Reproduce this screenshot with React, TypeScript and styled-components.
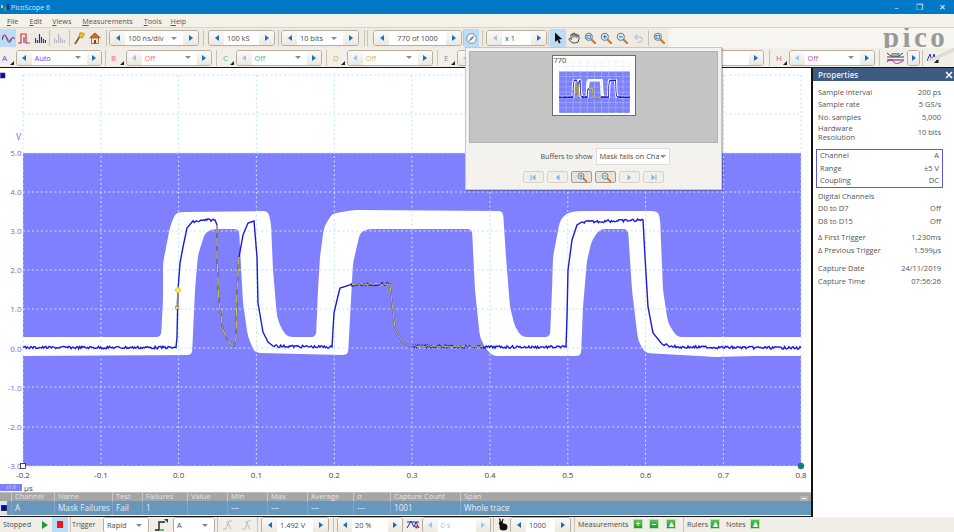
import React from "react";
import styled, { createGlobalStyle } from "styled-components";
import { Hand, Undo2 } from "lucide-react";

const UI_FONT = `"Open Sans", "Noto Sans", "Liberation Sans", sans-serif`;

const GlobalStyle = createGlobalStyle`
  html, body { margin: 0; padding: 0; background: #fff; overflow: hidden; }
  body { font-family: ${UI_FONT}; }
  * { box-sizing: border-box; }
`;

// waveform data is in page pixels, the svg viewBox below lines up with them
const MASK: [number, number][] = [
  [23, 337], [161, 337], [163, 300], [163, 263], [170, 227], [175, 214], [180, 212], [268, 211],
  [271, 223], [273, 270], [277, 317], [282, 330], [288, 337], [316, 337], [318, 290], [320, 257],
  [324, 227], [332, 214], [337, 213], [353, 210], [503, 211], [506, 257], [510, 307], [515, 327],
  [522, 337], [550, 337], [552, 290], [553, 257], [560, 220], [567, 213], [577, 211], [657, 211],
  [660, 217], [663, 290], [668, 323], [677, 337], [801, 337], [801, 356], [747, 356], [717, 357],
  [645, 353], [638, 340], [632, 290], [628, 229], [600, 229], [592, 240], [587, 260], [583, 307],
  [581, 356], [493, 356], [487, 350], [480, 338], [475, 290], [472, 229], [367, 229], [360, 233],
  [353, 263], [348, 355], [255, 353], [248, 337], [243, 303], [239, 229], [212, 229], [205, 233],
  [198, 255], [195, 290], [192, 355], [23, 356],
];

const TRACE: [number, number][] = [
  [23, 347.5], [176, 347.5], [177, 337], [178, 290], [180, 263], [183, 247], [187, 228], [192, 222],
  [207, 220], [215, 220], [217, 225], [217, 257], [219, 303], [223, 330], [228, 342], [234, 346],
  [236, 337], [237, 290], [239, 257], [243, 235], [248, 223], [254, 221], [257, 257], [258, 303],
  [263, 332], [268, 342], [273, 346], [332, 347], [334, 313], [337, 300], [340, 288], [350, 285],
  [390, 284], [392, 303], [395, 327], [402, 342], [410, 346], [483, 347], [566, 347], [567, 317],
  [568, 270], [572, 240], [577, 225], [582, 222], [643, 220], [645, 257], [648, 307], [653, 333],
  [662, 344], [677, 347], [801, 348],
];

function noisy(points: [number, number][], amp: number, seed: number) {
  let s = seed;
  const rnd = () => {
    s = (s * 9301 + 49297) % 233280;
    return s / 233280 - 0.5;
  };
  const out: string[] = [];
  points.forEach(([x, y], i) => {
    if (i === 0) {
      out.push(`M${x} ${y}`);
      return;
    }
    const [px, py] = points[i - 1];
    const flat = Math.abs(y - py) < Math.abs(x - px) * 0.3;
    const steps = flat ? Math.ceil((x - px) / 1.1) : 1;
    for (let k = 1; k <= steps; k++) {
      const t = k / steps;
      const j = flat && k < steps ? rnd() * amp : 0;
      out.push(`L${(px + (x - px) * t).toFixed(1)} ${(py + (y - py) * t + j).toFixed(1)}`);
    }
  });
  return out.join("");
}

// cuts each corner of the mask with a small curve, the plot edges stay square
function rounded(points: [number, number][], r: number) {
  const out: string[] = [];
  points.forEach(([x, y], i) => {
    const [px, py] = points[(i + points.length - 1) % points.length];
    const [nx, ny] = points[(i + 1) % points.length];
    if (x === 23 || x === 801) {
      out.push(`${i === 0 ? "M" : "L"}${x} ${y}`);
      return;
    }
    const l1 = Math.hypot(x - px, y - py);
    const l2 = Math.hypot(nx - x, ny - y);
    const a = Math.min(r, l1 / 2) / l1;
    const b = Math.min(r, l2 / 2) / l2;
    out.push(`L${x - (x - px) * a} ${y - (y - py) * a}Q${x} ${y} ${x + (nx - x) * b} ${y + (ny - y) * b}`);
  });
  return out.join("") + "Z";
}

const tracePath = noisy(TRACE, 2.6, 77);
const maskPath = rounded(MASK, 5);
const yellowA = "M217 225L217 257L219 303L223 330L228 342L234 346L236 337L237 290L239 257";
const yellowB = noisy(
  [[352, 284.5], [390, 284], [392, 303], [395, 327], [402, 342], [410, 346], [483, 347]],
  1.3,
  13,
);

const GRID_X = [23, 101, 178.6, 256.4, 334.3, 412, 490, 567.8, 645.6, 723.4, 801];
const GRID_Y = [75, 114, 153, 192, 231, 270, 309, 348, 387, 427, 466];

function ScopeDrawing({ thin }: { thin?: boolean }) {
  const dash = thin ? "8 8" : "2 2.5";
  const w = thin ? 6 : 1;
  return (
    <g>
      <rect x={23} y={153} width={778} height={313} fill="#8080ff" />
      <path d={maskPath} fill="#fff" />
      {GRID_X.map((x) => (
        <line key={x} x1={x} x2={x} y1={75} y2={466} stroke="#bde6f3" strokeWidth={w} strokeDasharray={dash} />
      ))}
      {GRID_Y.map((y) => (
        <line key={y} x1={23} x2={801} y1={y} y2={y} stroke="#bde6f3" strokeWidth={w} strokeDasharray={dash} />
      ))}
      <path d={tracePath} fill="none" stroke="#1a1ae0" strokeWidth={thin ? 9 : 1.4} />
      <path d={yellowA} fill="none" stroke="#8d8d70" strokeWidth={thin ? 9 : 1.2} />
      <path d={yellowA} fill="none" stroke="#e6df20" strokeWidth={thin ? 9 : 0.8} strokeDasharray="8 5" />
      <path d={yellowB} fill="none" stroke="#e6df20" strokeWidth={thin ? 9 : 0.9} />
      <line x1={178} y1={290} x2={177} y2={308} stroke="#8d8d70" strokeWidth={thin ? 8 : 1.5} />
      <rect x={175.5} y={306.5} width={3.5} height={2.5} fill="#ffe94a" stroke="#777" strokeWidth={0.5} />
      <polygon points="178,286.6 181.2,290 178,293.4 174.8,290" fill="#ffe94a" stroke="#a09a30" strokeWidth={0.5} />
    </g>
  );
}

const Page = styled.div`
  position: relative;
  width: 954px;
  height: 532px;
  overflow: hidden;
  display: flex;
  flex-direction: column;
  font-size: 8px;
  color: #4c4c4c;
`;

const TitleBar = styled.div`
  height: 14px;
  background: #0078c8;
  color: #d9ecf8;
  display: flex;
  align-items: center;
  padding-left: 1px;
  font-size: 7px;
  flex: none;
`;

const TitleText = styled.span`
  margin-left: 2px;
  flex: 1;
`;

const WinButton = styled.span`
  width: 23px;
  text-align: center;
  color: #e6f2fb;
  font-size: 8px;
  line-height: 14px;
`;

const MenuBar = styled.div`
  height: 14px;
  flex: none;
  background: #f4f1e9;
  display: flex;
  align-items: center;
  padding-left: 7px;
  font-size: 7.2px;
  color: #555;
  border-bottom: 1px solid #d8d2c8;
`;

const MenuItem = styled.span<{ $mr?: number }>`
  margin-right: ${(p) => p.$mr ?? 11}px;
  &::first-letter {
    text-decoration: underline;
  }
`;

const Toolbar = styled.div`
  position: relative;
  height: 20px;
  flex: none;
  display: flex;
  align-items: center;
  background: #f5f3ee;
  overflow: hidden;
`;

const ToolbarTop = styled(Toolbar)`
  background: linear-gradient(90deg, #efebe3 0, #efebe3 668px, #f6f5f1 669px);
`;

const ChannelRow = styled(Toolbar)`
  background: #f2efe8;
  border-bottom: 1px solid #141414;
`;

const BottomBar = styled(Toolbar)`
  height: 15px;
  align-items: flex-start;
  background: #f1eee7;
`;

const Sep = styled.span<{ $w?: number; $double?: boolean }>`
  flex: none;
  width: ${(p) => p.$w ?? 5}px;
  height: 16px;
  display: flex;
  justify-content: center;
  gap: 2px;
  &::before {
    content: "";
    width: 1px;
    background: #c9c2b6;
  }
  ${(p) => p.$double && `&::after { content: ""; width: 1px; background: #c9c2b6; }`}
`;

const IconBtn = styled.span<{ $w?: number; $active?: boolean; $h?: number }>`
  flex: none;
  width: ${(p) => p.$w ?? 16}px;
  height: ${(p) => p.$h ?? 18}px;
  display: flex;
  align-items: center;
  justify-content: center;
  background: ${(p) => (p.$active ? "#bcdcf6" : "transparent")};
`;

const Spin = styled.span<{ $w: number }>`
  flex: none;
  width: ${(p) => p.$w}px;
  height: 16px;
  display: flex;
  border: 1px solid #b9ae9e;
  border-radius: 3px;
  background: #f3f0ea;
  overflow: hidden;
`;

const Arrow = styled.span<{ $left?: boolean; $off?: boolean }>`
  flex: 1;
  display: flex;
  align-items: center;
  justify-content: center;
  background: linear-gradient(#fbfaf7, #ece8e0);
  &::before {
    content: "";
    border-style: solid;
    border-width: 3.5px 0;
    border-color: transparent;
    ${(p) => (p.$left ? "border-right" : "border-left")}: 4px solid
      ${(p) => (p.$off ? "#9cc5e6" : "#1a6fc4")};
  }
`;

const Field = styled.span<{ $w: number; $color?: string; $center?: boolean; $off?: boolean }>`
  flex: none;
  width: ${(p) => p.$w}px;
  background: #fff;
  color: ${(p) => (p.$off ? "#bbb" : p.$color ?? "#4c4c4c")};
  display: flex;
  align-items: center;
  justify-content: ${(p) => (p.$center ? "center" : "space-between")};
  padding: 0 3px;
  font-size: 7.4px;
  white-space: nowrap;
`;

const Caret = styled.span`
  width: 0;
  height: 0;
  margin-right: 3px;
  border-left: 3px solid transparent;
  border-right: 3px solid transparent;
  border-top: 3px solid #8a8a8a;
`;

const ChannelTag = styled.span<{ $w: number; $color: string }>`
  flex: none;
  position: relative;
  width: ${(p) => p.$w}px;
  height: 16px;
  padding-left: 2px;
  color: ${(p) => p.$color};
  font-size: 8px;
  line-height: 15px;
  &::after {
    content: "";
    position: absolute;
    right: 2px;
    bottom: 1px;
    border-style: solid;
    border-width: 0 0 4px 4px;
    border-color: transparent transparent #222 transparent;
  }
`;

const Logo = styled.span`
  position: absolute;
  left: 883px;
  top: -6px;
  font-family: "Liberation Serif", serif;
  font-weight: 700;
  font-size: 29px;
  letter-spacing: 3.4px;
  line-height: 30px;
  color: #9a9a96;
`;

const LogoSwoosh = styled.span`
  position: absolute;
  left: 928px;
  top: 0;
  width: 26px;
  height: 14px;
  background: linear-gradient(155deg, transparent 45%, #d8d6d0 46%, #e8e6e2 62%, transparent 63%);
`;

const Main = styled.div`
  flex: none;
  height: 449px;
  display: flex;
`;

const ScopePane = styled.div`
  flex: none;
  width: 813px;
  display: flex;
  flex-direction: column;
  border-right: 2px solid #141414;
  border-bottom: 1px solid #141414;
`;

const PlotSvg = styled.svg`
  display: block;
  flex: none;
  width: 811px;
  height: 414px;
  font-family: ${UI_FONT};
`;

const UnitRow = styled.div`
  height: 10px;
  flex: none;
  display: flex;
  align-items: center;
  font-size: 8px;
  color: #444;
`;

const ZoomChip = styled.span`
  width: 22px;
  height: 7px;
  background: #8080ff;
  color: #dcdcff;
  font-size: 5px;
  line-height: 7px;
  text-align: center;
  margin-right: 2px;
`;

const COLS = "11px 43px 58px 30px 45px 40px 40px 40px 46px 37px 70px 1fr";

const MeasureHead = styled.div`
  position: relative;
  height: 9px;
  flex: none;
  display: grid;
  grid-template-columns: ${COLS};
  background: #a5a5a5;
  color: #e4e4e4;
  font-size: 7.5px;
  line-height: 9px;
  box-shadow: inset 0 1px 0 #bdbdbd;
`;

const MeasureRow = styled.div`
  height: 15px;
  flex: none;
  display: grid;
  grid-template-columns: ${COLS};
  background: #6897bd;
  color: #e3edf5;
  font-size: 8.2px;
  line-height: 14px;
  border-bottom: 1px solid #fff;
`;

const Cell = styled.span`
  padding-left: 3px;
  border-left: 1px solid #c9c9c9;
  white-space: nowrap;
  overflow: hidden;
`;

const DataCell = styled(Cell)`
  border-left: 1px solid #7fa7c8;
`;

const RowMark = styled.span`
  background: #d8e3ec;
  display: flex;
  align-items: center;
  padding-left: 1px;
  width: 7px;
  &::before {
    content: "";
    width: 4px;
    height: 4px;
    background: #0000d0;
    border: 0.5px solid #333;
  }
`;

const Collapse = styled.span`
  position: absolute;
  right: 3px;
  top: 4px;
  width: 8px;
  height: 5px;
  background: #b5b5b5;
  &::before {
    content: "";
    display: block;
    margin: 2px 2px 0;
    height: 1px;
    background: #fff;
  }
`;

const Aside = styled.aside`
  flex: 1;
  background: #fff;
  color: #555;
  font-size: 7.5px;
`;

const AsideHead = styled.div`
  height: 13px;
  background: #3f5b82;
  color: #e8edf4;
  display: flex;
  align-items: center;
  justify-content: space-between;
  padding: 0 1px 0 5px;
  font-size: 8px;
  font-weight: 600;
`;

const AsideBody = styled.div`
  padding: 5px 13px 0 5px;
`;

const Prop = styled.div<{ $mt?: number; $h?: number }>`
  display: flex;
  justify-content: space-between;
  align-items: center;
  height: ${(p) => p.$h ?? 12.5}px;
  margin-top: ${(p) => p.$mt ?? 0}px;
  line-height: 9.5px;
  white-space: nowrap;
`;

const ChannelBox = styled.div`
  margin: 6px -2px 2px -2px;
  padding: 0 3px;
  border: 1px solid #5b5bd8;
`;

const Popover = styled.div`
  position: absolute;
  left: 465px;
  top: 47px;
  width: 257px;
  height: 143px;
  background: #f4f2ee;
  border: 1px solid #c9c7c2;
  box-shadow: 1px 1px 1px rgba(0, 0, 0, 0.25);
  padding: 3px 3px 0 3px;
  display: flex;
  flex-direction: column;
  align-items: center;
`;

const ThumbWell = styled.div`
  width: 249px;
  height: 92px;
  flex: none;
  background: #c4c4c4;
  border: 1px solid #b2b2b2;
  display: flex;
  justify-content: center;
  padding-top: 3px;
`;

const Thumb = styled.div`
  position: relative;
  width: 84px;
  height: 61px;
  background: #fff;
  border: 1px solid #6e6e6e;
  padding: 5px 0 0 6px;
`;

const ThumbLabel = styled.span`
  position: absolute;
  left: 1px;
  top: 0;
  font-size: 7.5px;
  line-height: 9px;
  color: #444;
`;

const ThumbSvg = styled.svg`
  display: block;
  width: 71px;
  height: 52px;
`;

const BufferRow = styled.div`
  display: flex;
  align-items: center;
  gap: 4px;
  margin-top: 5px;
  margin-left: 24px;
  height: 16px;
  font-size: 7.1px;
`;

const BufferSelect = styled.span`
  width: 74px;
  height: 17px;
  background: #fff;
  border: 1px solid #dedcd8;
  display: flex;
  align-items: center;
  justify-content: space-between;
  padding-left: 2px;
  font-size: 7.4px;
  white-space: nowrap;
  overflow: hidden;
`;

const BufferText = styled.span`
  width: 60px;
  overflow: hidden;
`;

const NavRow = styled.div`
  display: flex;
  gap: 3px;
  margin-top: 7px;
`;

const NavBtn = styled.span<{ $strong?: boolean }>`
  width: 21px;
  height: 12px;
  border: 1px solid ${(p) => (p.$strong ? "#a89c8c" : "#d6d2ca")};
  border-radius: 2px;
  background: ${(p) => (p.$strong ? "#e8e2d8" : "#f1efea")};
  display: flex;
  align-items: center;
  justify-content: center;
`;

const StatusText = styled.span<{ $w: number; $pl?: number }>`
  flex: none;
  width: ${(p) => p.$w}px;
  padding-left: ${(p) => p.$pl ?? 0}px;
  font-size: 7.2px;
  line-height: 15px;
  white-space: nowrap;
  color: #4c4c4c;
`;

const GreenBtn = styled.span<{ $mr?: number }>`
  flex: none;
  width: 10px;
  height: 10px;
  margin: 2px ${(p) => p.$mr ?? 6}px 0 0;
  background: linear-gradient(#55c455, #1f9a2e);
  border: 1px solid #bfe0bf;
  color: #fff;
  font-size: 9px;
  font-weight: 700;
  line-height: 7px;
  text-align: center;
`;

const StopSquare = styled.span`
  width: 6px;
  height: 7px;
  background: #f21414;
`;

function SkipIcon({ dir, end }: { dir: "l" | "r"; end?: boolean }) {
  return (
    <svg width={7} height={7} viewBox="0 0 7 7">
      <polygon points={dir === "l" ? "5.5,0.5 2,3.5 5.5,6.5" : "1.5,0.5 5,3.5 1.5,6.5"} fill="#7db6e0" />
      {end && <rect x={dir === "l" ? 0.5 : 5.5} y={0.5} width={1} height={6} fill="#7db6e0" />}
    </svg>
  );
}

function Magnifier({ kind, size = 12 }: { kind?: "plus" | "minus" | "box"; size?: number }) {
  return (
    <svg width={size} height={size} viewBox="0 0 12 12">
      <line x1={7.2} y1={7.2} x2={11} y2={11} stroke="#d0762a" strokeWidth={2.2} strokeLinecap="round" />
      <circle cx={4.8} cy={4.8} r={3.6} fill="#dbeaf6" stroke="#6b7a88" strokeWidth={1} />
      {kind === "plus" && <path d="M3 4.8h3.6M4.8 3v3.6" stroke="#1d5fae" strokeWidth={0.9} />}
      {kind === "minus" && <path d="M3 4.8h3.6" stroke="#1d5fae" strokeWidth={0.9} />}
      {kind === "box" && <rect x={3} y={3.4} width={3.6} height={2.8} fill="none" stroke="#1d5fae" strokeWidth={0.7} />}
    </svg>
  );
}

function IconWave() {
  return (
    <svg width={13} height={10} viewBox="0 0 13 10">
      <path d="M0 7c2-6 3-6 5-1s3 4 4 1 2-3 4-1" fill="none" stroke="#2c2cd0" strokeWidth={1} />
      <path d="M0 5c2-4 3-4 5 0s3 3 4 1 2-2 4 0" fill="none" stroke="#e02828" strokeWidth={1} />
    </svg>
  );
}

function IconPulse() {
  return (
    <svg width={12} height={11} viewBox="0 0 12 11">
      <path d="M0 10h3V1h5v9h4" fill="none" stroke="#e62a2a" strokeWidth={1.2} />
      <path d="M6 10V4" stroke="#2c2cd0" strokeWidth={1} />
    </svg>
  );
}

function IconBars({ color = "#2430b0" }: { color?: string }) {
  return (
    <svg width={11} height={10} viewBox="0 0 11 10">
      <path d="M0.5 10V5M2.5 10V7M4.5 10V1M6.5 10V4M8.5 10V6M10.5 10V7" stroke={color} strokeWidth={1.2} />
    </svg>
  );
}

function IconWand() {
  return (
    <svg width={12} height={13} viewBox="0 0 12 13">
      <path d="M2 12L7 4" stroke="#7a5a1c" strokeWidth={1.6} />
      <polygon points="7,0.5 11.5,1.5 9.5,6 6,5" fill="#f0c020" stroke="#a07a10" strokeWidth={0.6} />
    </svg>
  );
}

function IconHome() {
  return (
    <svg width={12} height={12} viewBox="0 0 12 12">
      <path d="M0.5 6L6 1l5.5 5" fill="#d86a20" stroke="#7a4518" strokeWidth={0.8} />
      <rect x={2.5} y={6} width={7} height={5.5} fill="#f4e6b8" stroke="#7a6a30" strokeWidth={0.8} />
      <rect x={5} y={8} width={2} height={3.5} fill="#7a4518" />
    </svg>
  );
}

function IconCompass() {
  return (
    <svg width={11} height={11} viewBox="0 0 11 11">
      <circle cx={5.5} cy={5.5} r={4.8} fill="#fff" stroke="#5a7fa8" strokeWidth={0.9} />
      <polygon points="8.5,2.2 6.2,6.2 4.8,4.8" fill="#e03030" />
      <polygon points="2.5,8.8 4.8,4.8 6.2,6.2" fill="#4070c0" />
    </svg>
  );
}

function IconCursor() {
  return (
    <svg width={9} height={12} viewBox="0 0 9 12">
      <polygon points="1,0.5 1,10 3.4,7.9 5,11.5 6.6,10.8 5,7.3 8.3,7.3" fill="#111" />
    </svg>
  );
}

function IconMask() {
  return (
    <svg width={19} height={12} viewBox="0 0 19 12">
      <path d="M1 1l4 3h8l4-3M1 5h17" fill="none" stroke="#444" strokeWidth={1} />
      <rect x={6} y={1.5} width={7} height={3} fill="#aaa" stroke="#444" strokeWidth={0.5} />
      <path d="M1 10c3-3 5-3 7 0s5 1 9-1" fill="none" stroke="#e02828" strokeWidth={1} />
      <path d="M1 8h17" stroke="#2c2cd0" strokeWidth={1} />
    </svg>
  );
}

function IconMath() {
  return (
    <svg width={12} height={10} viewBox="0 0 12 10">
      <path d="M0 8L3 1l2 7 2-7 2 7" fill="none" stroke="#3030b0" strokeWidth={1} />
      <polygon points="11.5,5 11.5,10 7,10" fill="#222" />
    </svg>
  );
}

function IconTrigger() {
  return (
    <svg width={14} height={12} viewBox="0 0 14 12">
      <path d="M1 11h4V3h6" fill="none" stroke="#222" strokeWidth={1.4} />
      <path d="M5 11h5" stroke="#28a040" strokeWidth={1.4} />
      <polygon points="10,0 14,0 14,4" fill="#2040a0" />
    </svg>
  );
}

function IconEdges() {
  return (
    <svg width={30} height={12} viewBox="0 0 30 12">
      <path d="M1 10h3l3-8h3M5 2l4 8M20 10h3l3-8h3M24 2l4 8" fill="none" stroke="#b8b8b8" strokeWidth={0.9} />
    </svg>
  );
}

function IconAlert() {
  return (
    <svg width={14} height={11} viewBox="0 0 14 11">
      <path d="M1 9l4-7 3 6 2-5 3 6" fill="none" stroke="#2c2cb0" strokeWidth={1} />
      <path d="M1 3h12" stroke="#2c2cb0" strokeWidth={1} />
      <circle cx={10.5} cy={8} r={1.6} fill="#d04030" />
    </svg>
  );
}

function IconRabbit() {
  return (
    <svg width={12} height={14} viewBox="0 0 12 14">
      <ellipse cx={6.5} cy={9} rx={4} ry={3.5} fill="#111" />
      <circle cx={4} cy={5.5} r={2.2} fill="#111" />
      <path d="M3.5 4L2.5 0.5M5 4l1-3" stroke="#111" strokeWidth={1.2} />
    </svg>
  );
}

function SpinBox(props: {
  w: number;
  field: number;
  text: string;
  color?: string;
  caret?: boolean;
  center?: boolean;
  leftOff?: boolean;
  off?: boolean;
}) {
  return (
    <Spin $w={props.w}>
      <Arrow $left $off={props.leftOff || props.off} />
      <Field $w={props.field} $color={props.color} $center={props.center} $off={props.off}>
        {props.text}
        {props.caret && <Caret />}
      </Field>
      <Arrow $off={props.off} />
    </Spin>
  );
}

// E, F and G sit under the buffer popover, their values are not visible
const CHANNELS: { tag: string; tagW: number; sep: number; color: string; text: string }[] = [
  { tag: "A", tagW: 16, sep: 7, color: "#4a4aff", text: "Auto" },
  { tag: "B", tagW: 17, sep: 9, color: "#ff6a6a", text: "Off" },
  { tag: "C", tagW: 15, sep: 9, color: "#4cc06c", text: "Off" },
  { tag: "D", tagW: 16, sep: 9, color: "#dcb850", text: "Off" },
  { tag: "E", tagW: 15, sep: 8, color: "#9a7ab0", text: "" },
  { tag: "", tagW: 16, sep: 9, color: "#7a9a9a", text: "" },
  { tag: "", tagW: 16, sep: 10, color: "#a0a040", text: "" },
  { tag: "H", tagW: 15, sep: 8, color: "#d84aa0", text: "Off" },
];

const MEASURE_COLS = ["Channel", "Name", "Test", "Failures", "Value", "Min", "Max", "Average", "σ", "Capture Count", "Span"];
const MEASURE_ROW = ["A", "Mask Failures", "Fail", "1", "", "---", "---", "---", "---", "1001", "Whole trace"];

export default function App() {
  return (
    <Page>
      <GlobalStyle />
      <TitleBar>
        <svg width={8} height={8} viewBox="0 0 8 8">
          <rect x={0} y={2} width={2} height={3} fill="#e8d020" />
          <rect x={3} y={4} width={2} height={4} fill="#30b040" />
          <rect x={6} y={1} width={2} height={6} fill="#203080" />
        </svg>
        <TitleText>PicoScope 6</TitleText>
        <WinButton>–</WinButton>
        <WinButton>❐</WinButton>
        <WinButton>✕</WinButton>
      </TitleBar>

      <MenuBar>
        <MenuItem>File</MenuItem>
        <MenuItem $mr={10}>Edit</MenuItem>
        <MenuItem>Views</MenuItem>
        <MenuItem>Measurements</MenuItem>
        <MenuItem $mr={9}>Tools</MenuItem>
        <MenuItem>Help</MenuItem>
      </MenuBar>

      <ToolbarTop>
        <IconBtn $active><IconWave /></IconBtn>
        <IconBtn><IconPulse /></IconBtn>
        <IconBtn><IconBars /></IconBtn>
        <Sep $w={3} />
        <IconBtn><IconBars color="#b9b9c4" /></IconBtn>
        <Sep $w={4} />
        <IconBtn><IconWand /></IconBtn>
        <IconBtn><IconHome /></IconBtn>
        <Sep $w={6} />
        <SpinBox w={90} field={58} text="100 ns/div" caret />
        <Sep $w={9} />
        <SpinBox w={67} field={35} text="100 kS" />
        <Sep $w={6} />
        <SpinBox w={78} field={46} text="10 bits" caret />
        <Sep $w={14} $double />
        <SpinBox w={89} field={57} text="770 of 1000" center />
        <Sep $w={2} />
        <IconBtn $w={15} $active><IconCompass /></IconBtn>
        <Sep $w={7} />
        <SpinBox w={61} field={29} text="x 1" leftOff />
        <Sep $w={3} />
        <IconBtn $active><IconCursor /></IconBtn>
        <IconBtn><Hand size={12} color="#222" strokeWidth={1.6} /></IconBtn>
        <IconBtn><Magnifier kind="box" /></IconBtn>
        <IconBtn><Magnifier kind="plus" /></IconBtn>
        <IconBtn><Magnifier kind="minus" /></IconBtn>
        <IconBtn><Undo2 size={11} color="#b9c4d4" strokeWidth={2.4} /></IconBtn>
        <Sep $w={5} />
        <IconBtn><Magnifier kind="box" /></IconBtn>
        <Logo>pico</Logo>
      </ToolbarTop>

      <ChannelRow>
        <LogoSwoosh />
        {CHANNELS.map((ch, i) => (
          <React.Fragment key={i}>
            <ChannelTag $w={ch.tagW} $color={ch.color}>{ch.tag}</ChannelTag>
            <SpinBox w={86} field={55} text={ch.text} color={ch.color} caret leftOff={i > 0} />
            <Sep $w={ch.sep} />
          </React.Fragment>
        ))}
        <IconBtn $w={24} $h={16}><IconMask /></IconBtn>
        <Spin $w={13}><Arrow /></Spin>
        <Sep $w={5} />
        <IconBtn $w={15} $h={16}><IconMath /></IconBtn>
      </ChannelRow>

      <Main>
        <ScopePane>
          <PlotSvg viewBox="0 68 811 414">
            <rect x={0.5} y={73} width={4.5} height={5} fill="#0000e0" stroke="#444" strokeWidth={0.6} />
            <ScopeDrawing />
            <text x={21} y={140} textAnchor="end" fontSize={8.5} fill="#7070f0">V</text>
            {["5.0", "4.0", "3.0", "2.0", "1.0", "0.0", "-1.0", "-2.0", "-3.0"].map((l, i) => (
              <text key={l} x={21.5} y={156 + i * 39.1} textAnchor="end" fontSize={8} fill="#6a6af0">{l}</text>
            ))}
            {["-0.2", "-0.1", "0.0", "0.1", "0.2", "0.3", "0.4", "0.5", "0.6", "0.7", "0.8"].map((l, i) => (
              <text key={l} x={GRID_X[i]} y={478} textAnchor="middle" fontSize={8} fill="#444">{l}</text>
            ))}
            <rect x={20.5} y={463.5} width={5} height={5} fill="#fff" stroke="#222" strokeWidth={0.8} />
            <circle cx={801} cy={466} r={3} fill="#118080" stroke="#0a5a5a" strokeWidth={0.5} />
          </PlotSvg>
          <UnitRow>
            <ZoomChip>x1.0</ZoomChip>
            µs
          </UnitRow>
          <MeasureHead>
            <span />
            {MEASURE_COLS.map((c) => (
              <Cell key={c}>{c}</Cell>
            ))}
            <Collapse />
          </MeasureHead>
          <MeasureRow>
            <RowMark />
            {MEASURE_ROW.map((c, i) => (
              <DataCell key={i}>{c}</DataCell>
            ))}
          </MeasureRow>
        </ScopePane>

        <Aside>
          <AsideHead>
            Properties
            <svg width={8} height={8} viewBox="0 0 8 8">
              <path d="M1 1l6 6M7 1L1 7" stroke="#fff" strokeWidth={1.5} />
            </svg>
          </AsideHead>
          <AsideBody>
            <Prop><span>Sample interval</span><span>200 ps</span></Prop>
            <Prop><span>Sample rate</span><span>5 GS/s</span></Prop>
            <Prop><span>No. samples</span><span>5,000</span></Prop>
            <Prop $h={19}><span>Hardware<br />Resolution</span><span>10 bits</span></Prop>
            <ChannelBox>
              <Prop><span>Channel</span><span>A</span></Prop>
              <Prop><span>Range</span><span>±5 V</span></Prop>
              <Prop><span>Coupling</span><span>DC</span></Prop>
            </ChannelBox>
            <Prop><span>Digital Channels</span></Prop>
            <Prop><span>D0 to D7</span><span>Off</span></Prop>
            <Prop><span>D8 to D15</span><span>Off</span></Prop>
            <Prop $mt={4}><span>Δ First Trigger</span><span>1.230ms</span></Prop>
            <Prop><span>Δ Previous Trigger</span><span>1.599µs</span></Prop>
            <Prop $mt={6}><span>Capture Date</span><span>24/11/2019</span></Prop>
            <Prop><span>Capture Time</span><span>07:56:26</span></Prop>
          </AsideBody>
        </Aside>
      </Main>

      <BottomBar>
        <StatusText $w={38} $pl={3}>Stopped</StatusText>
        <IconBtn $w={14} $h={15}>
          <svg width={6} height={8} viewBox="0 0 6 8"><polygon points="0,0 6,4 0,8" fill="#1f9a2e" /></svg>
        </IconBtn>
        <IconBtn $w={16} $h={15} $active><StopSquare /></IconBtn>
        <Sep $w={4} />
        <StatusText $w={31}>Trigger</StatusText>
        <Spin $w={46}>
          <Field $w={44}>Rapid<Caret /></Field>
        </Spin>
        <IconBtn $w={24} $h={15}><IconTrigger /></IconBtn>
        <Spin $w={42}>
          <Field $w={40}>A<Caret /></Field>
        </Spin>
        <Sep $w={5} />
        <IconBtn $w={34} $h={15}><IconEdges /></IconBtn>
        <Sep $w={7} />
        <SpinBox w={68} field={36} text="1.492 V" />
        <Sep $w={8} />
        <SpinBox w={66} field={36} text="20 %" />
        <IconBtn $w={19} $h={15}><IconAlert /></IconBtn>
        <SpinBox w={69} field={38} text="0 s" off />
        <Sep $w={4} />
        <IconBtn $w={15} $h={15}><IconRabbit /></IconBtn>
        <SpinBox w={61} field={29} text="1000" />
        <Sep $w={7} />
        <StatusText $w={55}>Measurements</StatusText>
        <GreenBtn>+</GreenBtn>
        <GreenBtn $mr={7}>–</GreenBtn>
        <GreenBtn>▲</GreenBtn>
        <Sep $w={3} />
        <StatusText $w={25} $pl={2}>Rulers</StatusText>
        <GreenBtn>▲</GreenBtn>
        <StatusText $w={24}>Notes</StatusText>
        <GreenBtn>▲</GreenBtn>
      </BottomBar>

      <Popover>
        <ThumbWell>
          <Thumb>
            <ThumbLabel>770</ThumbLabel>
            <ThumbSvg viewBox="23 75 778 391" preserveAspectRatio="none">
              <ScopeDrawing thin />
            </ThumbSvg>
          </Thumb>
        </ThumbWell>
        <BufferRow>
          Buffers to show
          <BufferSelect>
            <BufferText>Mask fails on Channel A</BufferText>
            <Caret />
          </BufferSelect>
        </BufferRow>
        <NavRow>
          <NavBtn><SkipIcon dir="l" end /></NavBtn>
          <NavBtn><SkipIcon dir="l" /></NavBtn>
          <NavBtn $strong><Magnifier kind="plus" size={10} /></NavBtn>
          <NavBtn $strong><Magnifier kind="minus" size={10} /></NavBtn>
          <NavBtn><SkipIcon dir="r" /></NavBtn>
          <NavBtn><SkipIcon dir="r" end /></NavBtn>
        </NavRow>
      </Popover>
    </Page>
  );
}
